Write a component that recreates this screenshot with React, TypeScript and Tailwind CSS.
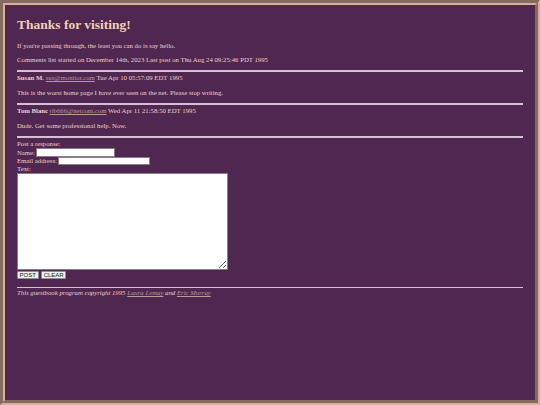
import React from 'react';

const COMMENTS = [
  {
    name: 'Susan M.',
    email: 'sus@monitor.com',
    date: 'Tue Apr 10 05:57:09 EDT 1995',
    text: 'This is the worst home page I have ever seen on the net. Please stop writing.',
  },
  {
    name: 'Tom Blanc',
    email: 'tlb666@netcom.com',
    date: 'Wed Apr 11 21:58:50 EDT 1995',
    text: 'Dude. Get some professional help. Now.',
  },
];

const Rule: React.FC = () => (
  <hr className="mt-[3.4px] mb-[2.8px] border-0 h-[1.5px] bg-[#d6c0d6]" />
);

const App: React.FC = () => {
  return (
    <div className="min-h-screen box-border border-[5px] [border-style:groove] border-[#d8b09a] bg-[#4f2751] px-[12px] pt-[3px] pb-[8px] text-[#ecd2c8] font-['Liberation_Serif',serif] text-[6.75px] leading-[7.6px]">
      <h1 className="mt-[9px] mb-[9px] text-[13.5px] leading-[15.5px] font-bold text-[#f4d0b2]">
        Thanks for visiting!
      </h1>
      <p className="my-[6.75px]">If you're passing through, the least you can do is say hello.</p>
      <p className="my-[6.75px]">
        Comments list started on December 14th, 2023 Last post on Thu Aug 24 09:25:46 PDT 1995
      </p>

      {COMMENTS.map((c) => (
        <div key={c.email}>
          <Rule />
          <div>
            <b>{c.name}</b>{' '}
            <a href="#" className="underline text-[#b89a92]">{c.email}</a> {c.date}
          </div>
          <p className="my-[6.75px]">{c.text}</p>
        </div>
      ))}
      <Rule />

      <form className="leading-[7.6px]">
        <div>Post a response:</div>
        <div className="flex items-center h-[8.7px]">
          Name:
          <input className="ml-[1px] w-[79px] h-[8.3px] bg-white border border-[#8a7a8a]" />
        </div>
        <div className="flex items-center h-[8.7px]">
          Email address:
          <input className="ml-[1px] w-[92px] h-[8px] bg-white border border-[#8a7a8a]" />
        </div>
        <div>Text:</div>
        <textarea className="block w-[211px] h-[97px] bg-white border border-[#8a7a8a] resize-y" />
        <div className="flex gap-[2.4px] mt-[0.6px]">
          <button type="button" className="h-[8.4px] w-[21.5px] bg-[#efefef] border border-[#8f8f8f] rounded-[1px] font-['Liberation_Sans',sans-serif] text-[6px] leading-none text-[#222]">
            POST
          </button>
          <button type="button" className="h-[8.4px] w-[25.5px] bg-[#efefef] border border-[#8f8f8f] rounded-[1px] font-['Liberation_Sans',sans-serif] text-[6px] leading-none text-[#222]">
            CLEAR
          </button>
        </div>
      </form>

      <hr className="mt-[7.8px] mb-[1.2px] border-0 h-[1.5px] bg-[#d6c0d6]" />
      <p className="italic my-[1.2px]">
        This guestbook program copyright 1995{' '}
        <a href="#" className="underline text-[#b89a92]">Laura Lemay</a> and{' '}
        <a href="#" className="underline text-[#b89a92]">Eric Murray</a>
      </p>
    </div>
  );
};

export default App;
